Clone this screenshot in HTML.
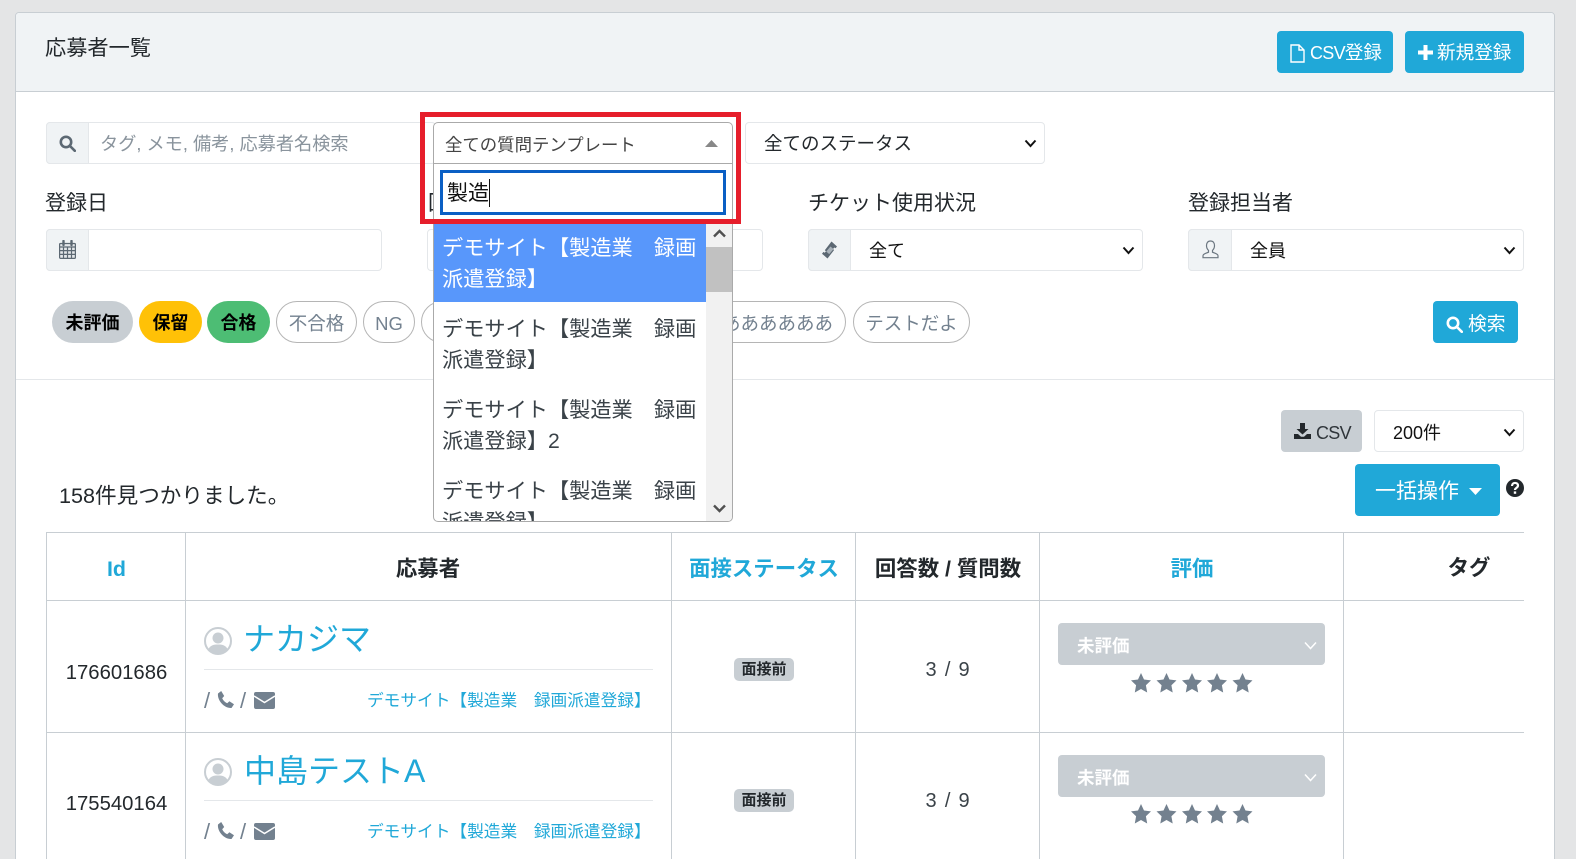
<!DOCTYPE html>
<html lang="ja"><head><meta charset="utf-8"><title>応募者一覧</title>
<style>
*{box-sizing:border-box}
html,body{margin:0;padding:0;width:1576px;height:859px;overflow:hidden;background:#e4e5e6;font-family:"Liberation Sans","Noto Sans CJK JP",sans-serif;color:#23282c}
#w{position:relative;width:1576px;height:859px;overflow:hidden}
.a{position:absolute}
.t{position:absolute;white-space:nowrap;line-height:30px;height:30px}
.c{transform:translateX(-50%)}
.box{position:absolute;background:#fff;border:1px solid #e4e7ea;border-radius:4px}
.pre{position:absolute;background:#f0f3f5;border:1px solid #e4e7ea;border-radius:4px 0 0 4px}
.btn{position:absolute;background:#20a8d8;color:#fff;border-radius:4px}
.tag{position:absolute;top:301px;height:42px;border-radius:21px;line-height:44px;text-align:center;font-size:18.500px;border:1px solid #b5b5b5;color:#73818f;background:#fff;white-space:nowrap;overflow:hidden}
.tag.b{border:0;font-weight:700;color:#000;font-size:18px;line-height:45px}
.h{font-weight:700;font-size:21.400px}
.bl{color:#20a8d8}
.l{position:absolute;background:#c8ced3}
.opt{position:absolute;left:8px;width:264px;font-size:21.200px;line-height:31px;color:#3a4248}
.n{letter-spacing:-.7px}
svg{position:absolute;display:block}
</style></head><body><div id="w">
<div class="a" style="left:15px;top:12px;width:1540px;height:860px;background:#fff;border:1px solid #c8ced3;border-radius:4px"></div>
<div class="a" style="left:16px;top:13px;width:1538px;height:79px;background:#f0f3f5;border-bottom:1px solid #c8ced3;border-radius:3px 3px 0 0"></div>
<div class="t" style="left:45px;top:34px;font-size:21.200px">応募者一覧</div>

<div class="btn" style="left:1277px;top:31px;width:116px;height:42px"></div>
<svg style="left:1289px;top:44px" width="17" height="19" viewBox="0 0 17 19" fill="none" stroke="#fff" stroke-width="1.400"><path d="M2 1h8l5 5v12H2zM10 1v5h5"/></svg>
<div class="t" style="left:1310px;top:38px;font-size:18.500px;color:#fff"><span class="n" style="font-size:18px">CSV</span>登録</div>
<div class="btn" style="left:1405px;top:31px;width:119px;height:42px"></div>
<svg style="left:1418px;top:45px" width="15" height="15" viewBox="0 0 15 15" fill="#fff"><path d="M5.500 0h4v5.500H15v4H9.500V15h-4V9.500H0v-4h5.500z"/></svg>
<div class="t" style="left:1437px;top:38px;font-size:18.600px;color:#fff">新規登録</div>

<!-- search row -->
<div class="box" style="left:46px;top:122px;width:390px;height:42px"></div>
<div class="pre" style="left:46px;top:122px;width:43px;height:42px"></div>
<svg style="left:59px;top:135px" width="17" height="17" viewBox="0 0 17 17" fill="none" stroke="#5c6873" stroke-width="2.600"><circle cx="7" cy="7" r="5.200"/><path d="M11 11l4.800 4.800" stroke-linecap="round"/></svg>
<div class="t" style="left:100px;top:129px;font-size:18.200px;color:#8a949d">タグ, メモ, 備考, 応募者名検索</div>

<div class="box" style="left:745px;top:122px;width:300px;height:42px"></div>
<div class="t" style="left:764px;top:129px;font-size:18.500px;color:#23282c">全てのステータス</div>
<svg style="left:1024px;top:139px" width="13" height="9" viewBox="0 0 13 9" fill="none" stroke="#111" stroke-width="2"><path d="M1.500 1.500l5 5.500 5-5.500"/></svg>

<!-- row 2 -->
<div class="t" style="left:45px;top:189px;font-size:21px">登録日</div>
<div class="box" style="left:46px;top:229px;width:336px;height:42px"></div>
<div class="pre" style="left:46px;top:229px;width:43px;height:42px"></div>
<svg style="left:59px;top:240px" width="17" height="19" viewBox="0 0 17 19" fill="none" stroke="#5c6873" stroke-width="1.200"><rect x=".6" y="3.500" width="15.800" height="14.900" rx="1" fill="#e4e7ea"/><path d="M.6 7h15.800M.6 10.600h15.800M.6 14.400h15.800M4.500 7v11.400M8.500 7v11.400M12.500 7v11.400"/><path d="M4.500 1v4M12.500 1v4" stroke-width="2.400" stroke-linecap="round"/></svg>
<div class="t" style="left:428px;top:189px;font-size:21px">回答日</div>
<div class="box" style="left:427px;top:229px;width:336px;height:42px"></div>

<div class="t" style="left:808px;top:189px;font-size:21px">チケット使用状況</div>
<div class="box" style="left:808px;top:229px;width:335px;height:42px"></div>
<div class="pre" style="left:808px;top:229px;width:43px;height:42px"></div>
<svg style="left:821px;top:241px" width="18" height="18" viewBox="0 0 18 18"><path d="M12 .5l5.500 5-1.500 1.800-1.200-.8-1.200 1.400.9 1.200L8 17.500l-5.500-4.800 1.500-1.800 1.200.9L6.500 10.300 5.300 9.200 12 .5z" fill="#5c6873" transform="translate(-1.500 0)"/><path d="M9.500 5.500l3 2.600-4.300 5-3-2.600z" fill="#a9b2ba"/></svg>
<div class="t" style="left:869px;top:236px;font-size:18px;color:#111">全て</div>
<svg style="left:1122px;top:246px" width="13" height="9" viewBox="0 0 13 9" fill="none" stroke="#111" stroke-width="2"><path d="M1.500 1.500l5 5.500 5-5.500"/></svg>

<div class="t" style="left:1188px;top:189px;font-size:21px">登録担当者</div>
<div class="box" style="left:1188px;top:229px;width:336px;height:42px"></div>
<div class="pre" style="left:1188px;top:229px;width:44px;height:42px"></div>
<svg style="left:1201px;top:240px" width="19" height="19" viewBox="0 0 19 19" fill="none" stroke="#6b7680" stroke-width="1.200"><path d="M9.500 1c2.800 0 4 2.200 4 4.600 0 2-1 3.800-2 4.800v1.800c2 1 5.500 1.500 5.500 3.500v2H2v-2c0-2 3.500-2.500 5.500-3.500v-1.800c-1-1-2-2.800-2-4.800C5.500 3.200 6.700 1 9.500 1z"/></svg>
<div class="t" style="left:1250px;top:236px;font-size:18px;color:#111">全員</div>
<svg style="left:1503px;top:246px" width="13" height="9" viewBox="0 0 13 9" fill="none" stroke="#111" stroke-width="2"><path d="M1.500 1.500l5 5.500 5-5.500"/></svg>

<!-- tags -->
<div class="tag b" style="left:52px;width:81px;background:#c8ced3">未評価</div>
<div class="tag b" style="left:139px;width:63px;background:#ffc107">保留</div>
<div class="tag b" style="left:207px;width:63px;background:#4dbd74">合格</div>
<div class="tag" style="left:276px;width:81px">不合格</div>
<div class="tag" style="left:363px;width:52px">NG</div>
<div class="tag" style="left:421px;width:60px"></div>
<div class="tag" style="left:690px;width:156px;text-align:right;padding-right:12px">ああああああ</div>
<div class="tag" style="left:853px;width:117px">テストだよ</div>
<div class="btn" style="left:1433px;top:301px;width:85px;height:42px"></div>
<svg style="left:1446px;top:316px" width="17" height="17" viewBox="0 0 17 17" fill="none" stroke="#fff" stroke-width="2.600"><circle cx="7" cy="7" r="5.200"/><path d="M11 11l4.800 4.800" stroke-linecap="round"/></svg>
<div class="t" style="left:1468px;top:309px;font-size:18.800px;color:#fff">検索</div>
<div class="a" style="left:16px;top:379px;width:1538px;height:1px;background:#e4e7ea"></div>

<!-- toolbar -->
<div class="a" style="left:1281px;top:410px;width:81px;height:42px;background:#c8ced3;border-radius:4px"></div>
<svg style="left:1294px;top:423px" width="17" height="16" viewBox="0 0 17 16" fill="#23282c"><path d="M6 0h5v6h3.500L8.500 11.500 2.500 6H6zM0 11h4l3 2.800h3L13 11h4v5H0z"/></svg>
<div class="t n" style="left:1316px;top:418px;font-size:18px;color:#2f353a">CSV</div>
<div class="box" style="left:1374px;top:410px;width:150px;height:42px"></div>
<div class="t" style="left:1393px;top:418px;font-size:18px;color:#111">200件</div>
<svg style="left:1503px;top:428px" width="13" height="9" viewBox="0 0 13 9" fill="none" stroke="#111" stroke-width="2"><path d="M1.500 1.500l5 5.500 5-5.500"/></svg>
<div class="btn" style="left:1355px;top:464px;width:145px;height:52px"></div>
<div class="t" style="left:1375px;top:477px;font-size:21px;color:#fff">一括操作</div>
<svg style="left:1469px;top:488px" width="13" height="7" viewBox="0 0 13 7" fill="#fff"><path d="M0 0h13L6.500 7z"/></svg>
<svg style="left:1506px;top:479px" width="18" height="18" viewBox="0 0 18 18"><circle cx="9" cy="9" r="9" fill="#23282c"/><path d="M6 7c0-4 6-4 6-.500 0 2.500-3 2.300-3 4.500" fill="none" stroke="#fff" stroke-width="2.200"/><rect x="7.800" y="12.400" width="2.400" height="2.400" fill="#fff"/></svg>
<div class="t" style="left:59px;top:481px;font-size:21.600px">158件見つかりました。</div>

<!-- table -->
<div class="l" style="left:46px;top:532px;width:1478px;height:1px"></div>
<div class="l" style="left:46px;top:600px;width:1478px;height:1px"></div>
<div class="l" style="left:46px;top:732px;width:1478px;height:1px"></div>
<div class="l" style="left:46px;top:532px;width:1px;height:327px"></div>
<div class="l" style="left:185px;top:532px;width:1px;height:327px"></div>
<div class="l" style="left:671px;top:532px;width:1px;height:327px"></div>
<div class="l" style="left:855px;top:532px;width:1px;height:327px"></div>
<div class="l" style="left:1039px;top:532px;width:1px;height:327px"></div>
<div class="l" style="left:1343px;top:532px;width:1px;height:327px"></div>
<div class="t c h bl" style="left:116.500px;top:554px">Id</div>
<div class="t c h" style="left:428px;top:554px">応募者</div>
<div class="t c h bl" style="left:764px;top:554px">面接ステータス</div>
<div class="t c h" style="left:948px;top:554px">回答数 / 質問数</div>
<div class="t c h bl" style="left:1192px;top:554px">評価</div>
<div class="t c h" style="left:1469px;top:553px">タグ</div>

<!-- row 1 -->
<div class="t c" style="left:116.500px;top:658px;font-size:20.300px">176601686</div>
<svg style="left:204px;top:627px" width="28" height="28" viewBox="0 0 28 28"><circle cx="14" cy="14" r="13" fill="#fff" stroke="#c8ced3" stroke-width="2"/><circle cx="14" cy="11" r="5.500" fill="#c8ced3"/><path d="M4 23c2-5 6-5.500 10-5.500S22 18 24 23c-5 5-15 5-20 0z" fill="#c8ced3"/></svg>
<div class="t bl" style="left:243px;top:624px;font-size:32px">ナカジマ</div>
<div class="a" style="left:204px;top:669px;width:449px;height:1px;background:#e4e7ea"></div>
<div class="t" style="left:204px;top:686px;font-size:22px;color:#73818f">/</div>
<svg style="left:217px;top:691px" width="18" height="18" viewBox="0 0 18 18" fill="#73818f"><path d="M1 2.500L4.200 0l3 5-2 2.200c1 2.300 2.800 4 5 5l2.200-2 4.600 3-2.500 3.800C7 17.500 0 9 1 2.500z"/></svg>
<div class="t" style="left:240px;top:686px;font-size:22px;color:#73818f">/</div>
<svg style="left:254px;top:692px" width="21" height="17" viewBox="0 0 21 17"><rect width="21" height="17" rx="2" fill="#73818f"/><path d="M0 4l10.500 6.500L21 4" fill="none" stroke="#fff" stroke-width="1.500"/></svg>
<div class="t bl" style="left:367px;top:686px;font-size:16.700px">デモサイト【製造業　録画派遣登録】</div>
<div class="a" style="left:734px;top:658px;width:60px;height:23px;background:#c8ced3;border-radius:5px;text-align:center;font:700 15px/24px 'Liberation Sans','Noto Sans CJK JP',sans-serif">面接前</div>
<div class="t c" style="left:948px;top:655px;font-size:20px;word-spacing:1px;letter-spacing:.8px;color:#3a4248">3 / 9</div>
<div class="a" style="left:1058px;top:623px;width:267px;height:42px;background:#c8ced3;border-radius:4px"></div>
<div class="t" style="left:1077px;top:631px;font-size:17.500px;font-weight:700;color:#fff">未評価</div>
<svg style="left:1304px;top:641px" width="13" height="9" viewBox="0 0 13 9" fill="none" stroke="#fff" stroke-width="1.500"><path d="M1 1.500l5.500 6 5.500-6"/></svg>
<svg style="left:1131px;top:673px" width="122" height="20" viewBox="0 0 122 20" fill="#73818f"><path d="M10 0l3 6.500 7 .9-5.100 4.900L16.200 19.500 10 16l-6.200 3.500 1.300-7.200L0 7.400l7-.9z"/><path transform="translate(25.500)" d="M10 0l3 6.500 7 .9-5.100 4.900L16.200 19.500 10 16l-6.200 3.500 1.300-7.200L0 7.400l7-.9z"/><path transform="translate(51)" d="M10 0l3 6.500 7 .9-5.100 4.900L16.200 19.500 10 16l-6.200 3.500 1.300-7.200L0 7.400l7-.9z"/><path transform="translate(76)" d="M10 0l3 6.500 7 .9-5.100 4.900L16.200 19.500 10 16l-6.200 3.500 1.300-7.200L0 7.400l7-.9z"/><path transform="translate(101.500)" d="M10 0l3 6.500 7 .9-5.100 4.900L16.200 19.500 10 16l-6.200 3.500 1.300-7.200L0 7.400l7-.9z"/></svg>

<!-- row 2 -->
<div class="t c" style="left:116.500px;top:789px;font-size:20.300px">175540164</div>
<svg style="left:204px;top:758px" width="28" height="28" viewBox="0 0 28 28"><circle cx="14" cy="14" r="13" fill="#fff" stroke="#c8ced3" stroke-width="2"/><circle cx="14" cy="11" r="5.500" fill="#c8ced3"/><path d="M4 23c2-5 6-5.500 10-5.500S22 18 24 23c-5 5-15 5-20 0z" fill="#c8ced3"/></svg>
<div class="t bl" style="left:244px;top:756px;font-size:32px">中島テストA</div>
<div class="a" style="left:204px;top:800px;width:449px;height:1px;background:#e4e7ea"></div>
<div class="t" style="left:204px;top:817px;font-size:22px;color:#73818f">/</div>
<svg style="left:217px;top:822px" width="18" height="18" viewBox="0 0 18 18" fill="#73818f"><path d="M1 2.500L4.200 0l3 5-2 2.200c1 2.300 2.800 4 5 5l2.200-2 4.600 3-2.500 3.800C7 17.500 0 9 1 2.500z"/></svg>
<div class="t" style="left:240px;top:817px;font-size:22px;color:#73818f">/</div>
<svg style="left:254px;top:823px" width="21" height="17" viewBox="0 0 21 17"><rect width="21" height="17" rx="2" fill="#73818f"/><path d="M0 4l10.500 6.500L21 4" fill="none" stroke="#fff" stroke-width="1.500"/></svg>
<div class="t bl" style="left:367px;top:817px;font-size:16.700px">デモサイト【製造業　録画派遣登録】</div>
<div class="a" style="left:734px;top:789px;width:60px;height:23px;background:#c8ced3;border-radius:5px;text-align:center;font:700 15px/24px 'Liberation Sans','Noto Sans CJK JP',sans-serif">面接前</div>
<div class="t c" style="left:948px;top:786px;font-size:20px;word-spacing:1px;letter-spacing:.8px;color:#3a4248">3 / 9</div>
<div class="a" style="left:1058px;top:755px;width:267px;height:42px;background:#c8ced3;border-radius:4px"></div>
<div class="t" style="left:1077px;top:763px;font-size:17.500px;font-weight:700;color:#fff">未評価</div>
<svg style="left:1304px;top:773px" width="13" height="9" viewBox="0 0 13 9" fill="none" stroke="#fff" stroke-width="1.500"><path d="M1 1.500l5.500 6 5.500-6"/></svg>
<svg style="left:1131px;top:804px" width="122" height="20" viewBox="0 0 122 20" fill="#73818f"><path d="M10 0l3 6.500 7 .9-5.100 4.900L16.200 19.500 10 16l-6.200 3.500 1.300-7.200L0 7.400l7-.9z"/><path transform="translate(25.500)" d="M10 0l3 6.500 7 .9-5.100 4.900L16.200 19.500 10 16l-6.200 3.500 1.300-7.200L0 7.400l7-.9z"/><path transform="translate(51)" d="M10 0l3 6.500 7 .9-5.100 4.900L16.200 19.500 10 16l-6.200 3.500 1.300-7.200L0 7.400l7-.9z"/><path transform="translate(76)" d="M10 0l3 6.500 7 .9-5.100 4.900L16.200 19.500 10 16l-6.200 3.500 1.300-7.200L0 7.400l7-.9z"/><path transform="translate(101.500)" d="M10 0l3 6.500 7 .9-5.100 4.900L16.200 19.500 10 16l-6.200 3.500 1.300-7.200L0 7.400l7-.9z"/></svg>

<!-- dropdown -->
<div class="a" style="left:433px;top:122px;width:300px;height:400px;background:#fff;border:1px solid #aaa;border-radius:5px;overflow:hidden">
  <div class="t" style="left:11px;top:7px;font-size:17.400px;color:#444">全ての質問テンプレート</div>
  <svg style="left:271px;top:17px" width="13" height="7" viewBox="0 0 13 7" fill="#888"><path d="M0 7L6.500 0 13 7z"/></svg>
  <div class="a" style="left:0;top:40px;width:298px;height:1px;background:#aaa"></div>
  <div class="a" style="left:6px;top:47px;width:286px;height:45px;border:3px solid #0a5fc4;background:#fff"></div>
  <div class="t" style="left:13px;top:56px;font-size:21px;color:#111">製造</div>
  <div class="a" style="left:55px;top:56px;width:1px;height:28px;background:#111"></div>
  <div class="a" style="left:0;top:101px;width:272px;height:78px;background:#5897fb"></div>
  <div class="opt" style="top:110px;color:#fff">デモサイト【製造業　録画<br>派遣登録】</div>
  <div class="opt" style="top:191px">デモサイト【製造業　録画<br>派遣登録】</div>
  <div class="opt" style="top:272px">デモサイト【製造業　録画<br>派遣登録】2</div>
  <div class="opt" style="top:353px">デモサイト【製造業　録画<br>派遣登録】</div>
  <div class="a" style="left:272px;top:101px;width:26px;height:297px;background:#f1f1f1"></div>
  <div class="a" style="left:272px;top:124px;width:26px;height:45px;background:#c1c1c1"></div>
  <svg style="left:279px;top:106px" width="13" height="9" viewBox="0 0 13 9" fill="none" stroke="#505050" stroke-width="2.400"><path d="M1 7.500l5.500-5.500 5.500 5.500"/></svg>
  <svg style="left:279px;top:381px" width="13" height="9" viewBox="0 0 13 9" fill="none" stroke="#505050" stroke-width="2.400"><path d="M1 1.500l5.500 5.500 5.500-5.500"/></svg>
</div>
<!-- red highlight -->
<div class="a" style="left:420px;top:112px;width:321px;height:112px;border:5px solid #e61e2b"></div>
</div></body></html>
